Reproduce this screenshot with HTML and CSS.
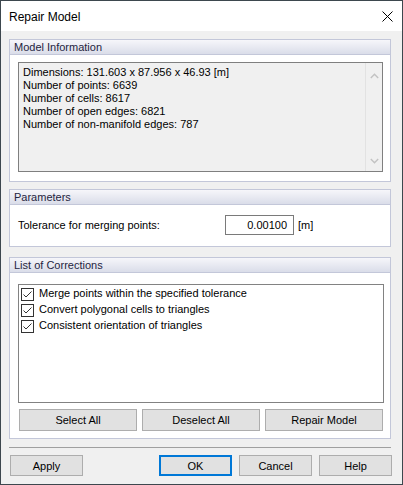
FILE: index.html
```html
<!DOCTYPE html>
<html>
<head>
<meta charset="utf-8">
<link rel="stylesheet" href="styles.css">
</head>
<body>
<div class="window">
  <div class="titlebar">
    <span class="title">Repair Model</span>
    <svg class="close" width="11" height="11" viewBox="0 0 11 11"><path d="M0.5 0.5 L10.5 10.5 M10.5 0.5 L0.5 10.5" stroke="#000" stroke-width="1" fill="none"/></svg>
  </div>
  <div class="content">
    <section class="group g-info">
      <div class="ghead">Model Information</div>
      <div class="gbody">
        <div class="infobox">
          <div class="infotext">
            <div>Dimensions: 131.603 x 87.956 x 46.93 [m]</div>
            <div>Number of points: 6639</div>
            <div>Number of cells: 8617</div>
            <div>Number of open edges: 6821</div>
            <div>Number of non-manifold edges: 787</div>
          </div>
          <div class="scroll">
            <svg width="9" height="6" viewBox="0 0 9 6"><path d="M0.8 5 L4.5 1.3 L8.2 5" stroke="#c2c2c2" stroke-width="1.4" fill="none"/></svg>
            <svg width="9" height="6" viewBox="0 0 9 6"><path d="M0.8 1 L4.5 4.7 L8.2 1" stroke="#c2c2c2" stroke-width="1.4" fill="none"/></svg>
          </div>
        </div>
      </div>
    </section>
    <section class="group g-params">
      <div class="ghead">Parameters</div>
      <div class="gbody params">
        <span class="plabel">Tolerance for merging points:</span>
        <div class="field">0.00100</div>
        <span class="unit">[m]</span>
      </div>
    </section>
    <section class="group g-list">
      <div class="ghead">List of Corrections</div>
      <div class="gbody">
        <div class="listbox">
          <div class="item"><svg class="cb" width="13" height="13" viewBox="0 0 13 13"><rect x="0.5" y="0.5" width="12" height="12" fill="#fff" stroke="#333"/><path d="M2.5 6.5 L5 9 L10.5 3.5" stroke="#333" stroke-width="1" fill="none"/></svg><span>Merge points within the specified tolerance</span></div>
          <div class="item"><svg class="cb" width="13" height="13" viewBox="0 0 13 13"><rect x="0.5" y="0.5" width="12" height="12" fill="#fff" stroke="#333"/><path d="M2.5 6.5 L5 9 L10.5 3.5" stroke="#333" stroke-width="1" fill="none"/></svg><span>Convert polygonal cells to triangles</span></div>
          <div class="item"><svg class="cb" width="13" height="13" viewBox="0 0 13 13"><rect x="0.5" y="0.5" width="12" height="12" fill="#fff" stroke="#333"/><path d="M2.5 6.5 L5 9 L10.5 3.5" stroke="#333" stroke-width="1" fill="none"/></svg><span>Consistent orientation of triangles</span></div>
        </div>
        <div class="btnrow">
          <button class="btn">Select All</button>
          <button class="btn">Deselect All</button>
          <button class="btn">Repair Model</button>
        </div>
      </div>
    </section>
    <div class="sep"></div>
    <div class="footer">
      <button class="btn fbtn">Apply</button>
      <div class="spacer"></div>
      <button class="btn fbtn default">OK</button>
      <button class="btn fbtn">Cancel</button>
      <button class="btn fbtn">Help</button>
    </div>
  </div>
</div>
</body>
</html>
```
FILE: styles.css
```css
* { box-sizing: border-box; }
html, body { margin: 0; padding: 0; }
body {
  font-family: "Liberation Sans", Arial, sans-serif;
  font-size: 11px;
  color: #000;
  background: #f0f0f0;
}
.window {
  width: 403px;
  height: 485px;
  border: 1px solid #3d474e;
  background: #f0f0f0;
  display: flex;
  flex-direction: column;
}
.titlebar {
  height: 30px;
  background: #fff;
  display: flex;
  align-items: center;
  padding-left: 8px;
  padding-right: 9px;
  flex: none;
}
.title {
  font-size: 12px;
  flex: 1;
  padding-top: 1px;
}
.close { display: block; margin-top: 1px; }
.content {
  flex: 1;
  padding: 8px 11px 0 8px;
  display: flex;
  flex-direction: column;
}
.group {
  border: 1px solid #c3c7d9;
  background: #fff;
}
.ghead {
  height: 15px;
  line-height: 15px;
  padding-left: 4px;
  color: #25253f;
  background: linear-gradient(#f6f6fa, #dadde9);
  border-bottom: 1px solid #c3c7d9;
}
.g-info .gbody { padding: 7px 7px 9px 8px; }
.infobox {
  height: 110px;
  border: 1px solid #7f7f7f;
  background: #f0f0f0;
  display: flex;
}
.infotext {
  flex: 1;
  padding: 3px 4px;
  line-height: 13px;
}
.scroll {
  width: 17px;
  border-left: 1px solid #e2e2e2;
  display: flex;
  flex-direction: column;
  justify-content: space-between;
  align-items: center;
  padding: 10px 0 7px 1px;
}
.scroll svg { display: block; }
.g-params { margin-top: 7px; }
.params {
  display: flex;
  align-items: center;
  padding: 10px 0 11px 8px;
}
.plabel { width: 207px; }
.field {
  width: 69px;
  height: 20px;
  border: 1px solid #7a7a7a;
  background: #fff;
  text-align: right;
  padding-right: 6px;
  line-height: 18px;
}
.unit { margin-left: 4px; }
.g-list { margin-top: 10px; }
.g-list .gbody { padding: 11px 6px 7px 8px; }
.listbox {
  height: 119px;
  border: 1px solid #828282;
  background: #fff;
  padding: 3px 2px;
}
.item {
  height: 16px;
  display: flex;
  align-items: flex-start;
}
.cb { display: block; flex: none; margin-right: 5px; }
.item span { line-height: 13px; margin-top: -1px; }
.btnrow {
  margin-top: 6px;
  margin-left: 1px;
  display: grid;
  grid-template-columns: 118px 118px 118px;
  column-gap: 5px;
}
.btn {
  font-family: "Liberation Sans", Arial, sans-serif;
  font-size: 11px;
  color: #000;
  background: #e1e1e1;
  border: 1px solid #adadad;
  height: 22px;
  padding: 0;
  margin: 0;
}
.sep {
  margin-top: 8px;
  height: 1px;
  background: #a0a0a0;
  width: 382px;
}
.footer {
  margin-top: 7px;
  display: flex;
  margin-left: 1px;
  margin-right: -1px;
  column-gap: 7px;
}
.fbtn { width: 73px; height: 21px; }
.spacer { flex: 1; }
.default { border: 2px solid #0078d7; }
```
